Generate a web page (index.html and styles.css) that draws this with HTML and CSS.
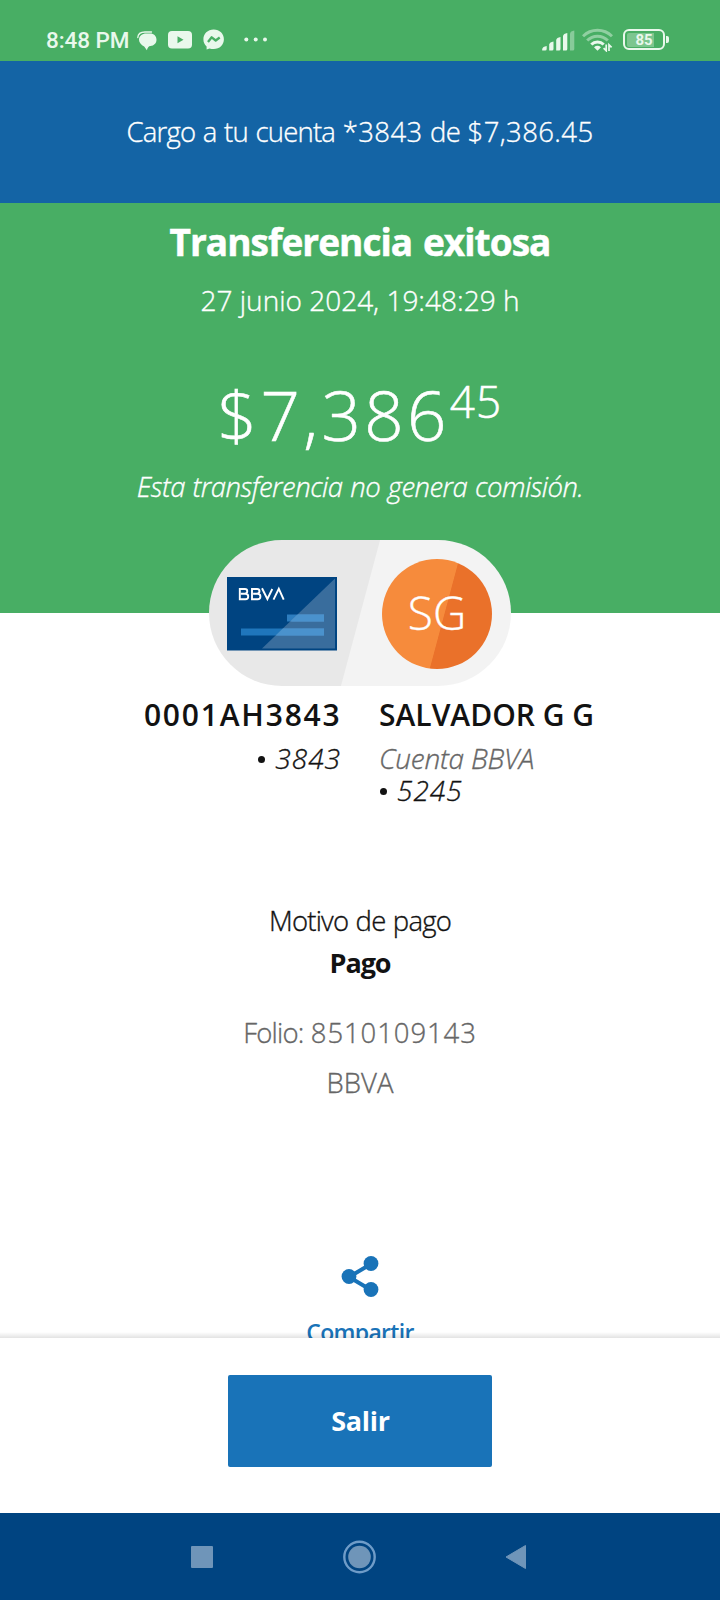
FILE: index.html
```html
<!DOCTYPE html>
<html lang="es">
  <head>
    <meta charset="UTF-8" />
    <meta name="viewport" content="width=device-width, initial-scale=1.0" />
    <title>Transferencia exitosa</title>
    <link rel="stylesheet" href="styles.css" />
  </head>
  <body>
    <div class="screen">
      <header class="status">
        <span class="time">8:48 PM</span>
        <svg class="icon-chat" width="20" height="20" viewBox="0 0 20 20">
          <path d="M9.500 2.500h3.500c4 0 6.500 2.700 6.500 6.200 0 3.500-2.600 5.900-6 6.300-2 .3-2.900 1.300-3.600 4.300L7.200 15.500C4.200 14 2 11.500 2 8.800 2 5 5 2.500 9.500 2.500z" fill="#e9f8ec" />
          <path d="M.8 6.500C1 3 4 1 8 1h6.500" fill="none" stroke="#e9f8ec" stroke-width="1.300" stroke-linecap="round" />
        </svg>
        <svg class="icon-video" width="24" height="18" viewBox="0 0 24 18">
          <rect width="24" height="17.500" rx="4" fill="#e9f8ec" />
          <path d="M9.500 5.200v7l6-3.500z" fill="#48ae64" />
        </svg>
        <svg class="icon-messenger" width="22" height="22" viewBox="0 0 22 22">
          <path d="M10.700.5C4.700.5.4 4.800.4 10.300c0 3 1.200 5.500 3.200 7.300v3l2.900-1.200c1.300.5 2.700.7 4.200.7 6 0 10.200-4.300 10.200-9.800S16.700.5 10.700.5z" fill="#e9f8ec" />
          <path d="M5 13l3.700-4.700 4 3.200L16.700 8.500" fill="none" stroke="#48ae64" stroke-width="2.300" stroke-linejoin="round" />
        </svg>
        <svg class="icon-more" width="24" height="5" viewBox="0 0 24 5">
          <g fill="#e9f8ec"><circle cx="2.300" cy="2.500" r="2" /><circle cx="11.700" cy="2.500" r="2" /><circle cx="21" cy="2.500" r="2" /></g>
        </svg>
        <svg class="icon-signal" width="33" height="21" viewBox="0 0 33 21">
          <g fill="#e9f8ec">
            <path d="M.2 20.500v-1.500q.5-2.500 4.500-3v3q0 1.500-1.500 1.500z" />
            <path d="M7.200 20.500v-6q.5-2.500 4.300-3v7.500q0 1.500-1.500 1.500z" />
            <path d="M14.200 20.500v-10.500q.5-2.500 4.300-3v12q0 1.500-1.500 1.500z" />
            <path d="M21 20.500v-14.500q.5-2.500 4.300-3v16q0 1.500-1.500 1.500z" />
            <path d="M28 20.500v-17q.5-2.500 4.300-3v18.500q0 1.500-1.500 1.500z" opacity=".4" />
          </g>
        </svg>
        <svg class="icon-wifi" width="31" height="24" viewBox="0 0 31 24">
          <g fill="none" stroke="#e9f8ec" stroke-width="3">
            <path d="M1 8.300a20.500 20.500 0 0 1 29 0" opacity=".45" />
            <path d="M5.200 12.500a14.600 14.600 0 0 1 20.600 0" opacity=".45" />
            <path d="M9.300 16.500a8.800 8.800 0 0 1 12.400 0" />
          </g>
          <path d="M12 19.200q3.500-2.700 7 0L15.500 22.800z" fill="#e9f8ec" />
          <path d="M24.200 16.500v6.200l-2.600-2.600M27 23v-6.200l2.600 2.600" fill="none" stroke="#e9f8ec" stroke-width="1.700" />
        </svg>
        <div class="battery"><span class="battery-level">85</span></div>
      </header>

      <div class="banner">Cargo a tu cuenta <span class="num">*3843</span> de <span class="num">$7,386.45</span></div>

      <main class="content">
        <section class="hero">
          <h1 class="title">Transferencia exitosa</h1>
          <p class="date">27 junio 2024, 19:48:29 h</p>
          <p class="amount"><span class="whole">$7,386</span><span class="cents">45</span></p>
          <p class="note">Esta transferencia no genera comisión.</p>
        </section>

        <div class="pill">
          <svg class="card" width="110" height="74" viewBox="0 0 110 74">
            <rect width="110" height="73.500" fill="#004481" />
            <rect x="60" y="37.500" width="37" height="7" fill="#2d7dbf" />
            <rect x="14" y="51.500" width="83" height="7" fill="#1f76bc" />
            <path d="M108 1.500V71.500H35z" fill="#9fb6d0" opacity=".36" />
            <path d="M71 37.500h26v7H64zM56 51.500h41v7H49z" fill="#4a92cd" />
            <g fill="none" stroke="#fff" stroke-width="1.900">
              <path d="M12.800 12v10.300h5.600a2.800 2.800 0 0 0 0-5.600h-4.500 4a2.300 2.300 0 0 0 0-4.700z" />
              <path d="M25 12v10.300h5.600a2.800 2.800 0 0 0 0-5.600h-4.500 4a2.300 2.300 0 0 0 0-4.700z" />
              <path d="M35 11.300l5.400 10.700 4.900-10M46.500 22.700l5.300-10.900 4.900 10.900" />
            </g>
          </svg>
          <div class="avatar">SG</div>
        </div>

        <section class="accounts">
          <div class="from">
            <p class="name code">0001AH3843</p>
            <p class="number"><b class="dot"></b>3843</p>
          </div>
          <div class="to">
            <p class="name">SALVADOR G G</p>
            <p class="bank">Cuenta BBVA</p>
            <p class="number"><b class="dot"></b>5245</p>
          </div>
        </section>

        <section class="details">
          <p class="label">Motivo de pago</p>
          <p class="reason">Pago</p>
          <p class="folio">Folio: <span class="num">8510109143</span></p>
          <p class="folio entity">BBVA</p>
        </section>

        <div class="share">
          <svg width="38" height="42" viewBox="0 0 38 42">
            <path d="M30 8L8 21l22 13" fill="none" stroke="#1973b8" stroke-width="4" />
            <g fill="#1973b8"><circle cx="30" cy="7.500" r="7.400" /><circle cx="8" cy="20.500" r="7.400" /><circle cx="30" cy="33.500" r="7.400" /></g>
          </svg>
          <span>Compartir</span>
        </div>
      </main>

      <footer class="actions">
        <button class="exit">Salir</button>
      </footer>

      <nav class="navbar">
        <svg width="22" height="22" viewBox="0 0 22 22"><rect width="22" height="22" rx="1" fill="#6f95b9" /></svg>
        <svg width="34" height="34" viewBox="0 0 34 34">
          <circle cx="17.500" cy="17" r="15.200" fill="none" stroke="#6f9cc8" stroke-width="2.400" />
          <circle cx="17.500" cy="17" r="11.300" fill="#6f95b9" />
        </svg>
        <svg width="22" height="26" viewBox="0 0 22 26"><path d="M20.500 1.500v23L1 13z" fill="#6f95b9" stroke="#6f95b9" stroke-linejoin="round" /></svg>
      </nav>
    </div>
  </body>
</html>
```
FILE: styles.css
```css
* {
  box-sizing: border-box;
}

body {
  margin: 0;
  background: #fff;
  font-family: "Open Sans", "Noto Sans", sans-serif;
}

h1,
p {
  margin: 0;
  white-space: nowrap;
}

.screen {
  display: flex;
  flex-direction: column;
  width: 720px;
  height: 1600px;
  overflow: hidden;
}

/* status bar */
.status {
  display: flex;
  align-items: center;
  flex: none;
  height: 61px;
  padding: 18px 51px 0 46px;
  background: #48ae64;
  color: #e9f8ec;
}

.time {
  width: 91px;
  padding-top: 1px;
  font: 500 22.5px/26px Roboto, sans-serif;
  letter-spacing: -0.1px;
  white-space: nowrap;
}

.icon-chat {
  margin-top: 2px;
}

.icon-video {
  margin-left: 11px;
}

.icon-messenger {
  margin-left: 11px;
}

.icon-more {
  margin-left: 19px;
}

.icon-signal {
  margin: 1px 0 0 auto;
}

.icon-wifi {
  margin-left: 7px;
}

.battery {
  position: relative;
  width: 42px;
  height: 21px;
  margin: 0 4px 0 10px;
  padding: 2px;
  border: 2.5px solid #e9f8ec;
  border-radius: 6px;
}

.battery::after {
  content: "";
  position: absolute;
  top: 5px;
  right: -6px;
  width: 3px;
  height: 7px;
  border-radius: 0 2px 2px 0;
  background: #e9f8ec;
}

.battery-level {
  display: block;
  border-radius: 2px;
  background: linear-gradient(90deg, #7cc68f 80%, transparent 80%);
  font: 700 15px/14px Roboto, sans-serif;
  text-align: center;
}

/* light text is drawn a touch heavier than the 300 weight */
.banner,
.date,
.note,
.avatar,
.number,
.bank,
.label,
.folio {
  -webkit-text-stroke: 0.35px currentColor;
}

.banner {
  flex: none;
  height: 142px;
  padding-top: 51px;
  background: #1464a5;
  color: #fff;
  font-size: 27.5px;
  font-weight: 300;
  letter-spacing: -0.8px;
  line-height: 40px;
  text-align: center;
  word-spacing: 1.2px;
}

.num {
  letter-spacing: 0.4px;
}

.content {
  flex: 1;
  min-height: 0;
  overflow: hidden;
}

.hero {
  height: 410px;
  padding-top: 14px;
  background: #48ae64;
  color: #fff;
  text-align: center;
}

.title {
  font-size: 37px;
  font-weight: 700;
  letter-spacing: -0.95px;
  line-height: 50px;
  word-spacing: 2px;
  -webkit-text-stroke: 0.5px currentColor;
}

.date {
  margin-top: 13px;
  font-size: 28px;
  font-weight: 300;
  line-height: 40px;
}

.amount {
  display: flex;
  justify-content: center;
  margin-top: 54px;
  font-size: 69px;
  font-weight: 300;
  line-height: 80px;
  -webkit-text-stroke: 0.6px currentColor;
}

.whole {
  letter-spacing: 3.4px;
}

.cents {
  font-size: 44px;
  letter-spacing: 1.2px;
  line-height: 54px;
}

.note {
  margin-top: 13px;
  font-size: 27.5px;
  font-style: italic;
  font-weight: 300;
  letter-spacing: -0.5px;
  line-height: 40px;
  word-spacing: 1px;
}

/* origin and destination */
.pill {
  position: relative;
  display: flex;
  align-items: center;
  justify-content: space-between;
  width: 302px;
  height: 146px;
  margin: -73px auto 0 209px;
  padding: 1px 19px 0 18px;
  border-radius: 73px;
  background: linear-gradient(105deg, #e8e8e8 50%, #f3f3f3 50.3%);
}

.avatar {
  width: 110px;
  height: 110px;
  border-radius: 50%;
  background: linear-gradient(105deg, #f68b3c 55%, #ea712a 55.6%);
  color: #fff;
  font-size: 46px;
  font-weight: 300;
  line-height: 107px;
  text-align: center;
}

.accounts {
  display: grid;
  grid-template-columns: 341px 1fr;
  column-gap: 38px;
  margin-top: 9px;
  color: #121212;
}

.from {
  text-align: right;
}

.name {
  margin-bottom: 7px;
  font-size: 30px;
  font-weight: 600;
  line-height: 40px;
}

.code {
  margin-right: -0.5px;
  letter-spacing: 1.8px;
}

.number,
.bank {
  font-size: 28px;
  font-style: italic;
  font-weight: 300;
  line-height: 32px;
}

.number {
  letter-spacing: 1px;
}

.bank {
  color: #666;
  letter-spacing: -0.25px;
}

.dot {
  display: inline-block;
  width: 7px;
  height: 7px;
  margin: 0 10px 6px 1px;
  border-radius: 50%;
  background: #121212;
}

.details {
  margin-top: 94px;
  color: #121212;
  font-size: 27.5px;
  font-weight: 300;
  letter-spacing: -0.8px;
  line-height: 42px;
  text-align: center;
  word-spacing: 1px;
}

.reason {
  font-size: 27px;
  font-weight: 700;
  letter-spacing: -1.1px;
}

.folio {
  color: #666;
  line-height: 50px;
}

.folio .num {
  letter-spacing: 0.9px;
}

.entity {
  letter-spacing: 0;
}

.reason + .folio {
  margin-top: 24px;
}

.share {
  display: flex;
  flex-direction: column;
  align-items: center;
  margin-top: 148px;
  color: #1973b8;
  font-size: 23px;
  font-weight: 600;
  letter-spacing: -0.7px;
  line-height: 36px;
}

.share span {
  margin-top: 16px;
}

/* bottom bar */
.actions {
  position: relative;
  flex: none;
  height: 175px;
  padding-top: 37px;
  background: #fff;
  text-align: center;
}

.actions::before {
  content: "";
  position: absolute;
  left: 0;
  top: -6px;
  width: 100%;
  height: 6px;
  background: linear-gradient(rgba(0, 0, 0, 0), rgba(0, 0, 0, 0.11));
}

.exit {
  width: 264px;
  height: 92px;
  padding: 0 0 1px 1px;
  border: none;
  border-radius: 2px;
  background: #1973b8;
  color: #fff;
  font: 700 27px/40px "Open Sans", sans-serif;
  letter-spacing: -0.3px;
}

.navbar {
  display: flex;
  align-items: center;
  justify-content: space-between;
  flex: none;
  height: 87px;
  padding: 0 193px 0 191px;
  background: #004481;
}
```
